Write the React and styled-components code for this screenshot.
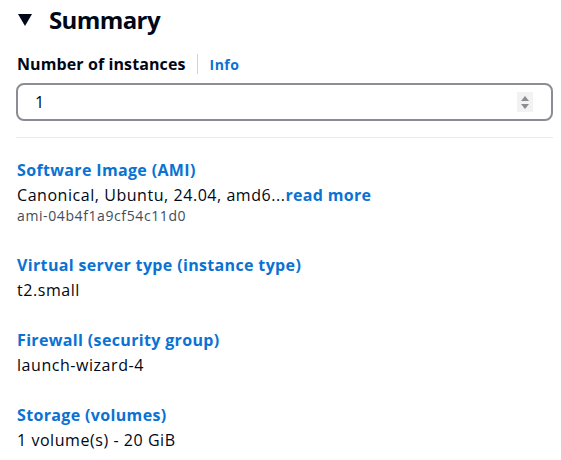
import React from "react";
import styled, { createGlobalStyle } from "styled-components";

const GlobalStyle = createGlobalStyle`
  body {
    margin: 0;
    background: #ffffff;
    font-family: "Open Sans", "Noto Sans", Arial, sans-serif;
    color: #000716;
  }
`;

const Panel = styled.section`
  width: 561px;
  box-sizing: border-box;
  padding: 5px 8px 0 16px;
  display: flex;
  flex-direction: column;
`;

const Header = styled.h2`
  margin: 0;
  display: flex;
  align-items: center;
  gap: 17px;
  font-size: 24px;
  line-height: 30px;
  font-weight: 700;
  letter-spacing: -0.6px;
  color: #000716;
  padding-left: 2px;
`;

const Caret = styled.svg`
  width: 14px;
  height: 12px;
  flex: none;
`;

const LabelRow = styled.div`
  margin-top: 18px;
  display: flex;
  align-items: center;
  height: 22px;
`;

const Label = styled.span`
  font-size: 16px;
  font-weight: 700;
  line-height: 22px;
  letter-spacing: 0.1px;
  padding-left: 1px;
`;

const Separator = styled.span`
  width: 1px;
  height: 20px;
  background: #d1d5db;
  margin: 0 12px 0 11px;
`;

const InfoLink = styled.a`
  font-size: 14px;
  font-weight: 700;
  letter-spacing: 0.5px;
  color: #0972d3;
  text-decoration: none;
`;

const InputBox = styled.div`
  margin-top: 8px;
  height: 38px;
  box-sizing: border-box;
  border: 2px solid #8c8c94;
  border-radius: 8px;
  display: flex;
  align-items: center;
  justify-content: space-between;
  padding: 0 18px 0 17px;
  font-size: 16px;
`;

const Spinner = styled.svg`
  width: 16px;
  height: 20px;
`;

const Divider = styled.hr`
  margin: 16px 0 0;
  border: none;
  border-top: 1px solid #e9ebed;
`;

const List = styled.div`
  margin-top: 21px;
  display: flex;
  flex-direction: column;
  gap: 28px;
`;

const Item = styled.div`
  display: flex;
  flex-direction: column;
`;

const Key = styled.a`
  font-size: 16px;
  font-weight: 700;
  line-height: 22px;
  letter-spacing: 0.35px;
  color: #0972d3;
  text-decoration: none;
  margin-bottom: 3px;
  padding-left: 1px;
`;

const Value = styled.div`
  font-size: 16px;
  line-height: 22px;
  letter-spacing: 0.55px;
  padding-left: 1px;
`;

const More = styled.a`
  color: #0972d3;
  font-weight: 700;
  letter-spacing: 0.3px;
  text-decoration: none;
`;

const Sub = styled.div`
  font-size: 14px;
  line-height: 20px;
  letter-spacing: 0.6px;
  color: #414d5c;
  padding-left: 1px;
`;

const items = [
  {
    key: "Software Image (AMI)",
    value: (
      <>
        Canonical, Ubuntu, 24.04, amd6...<More href="#">read more</More>
      </>
    ),
    sub: "ami-04b4f1a9cf54c11d0",
  },
  { key: "Virtual server type (instance type)", value: "t2.small" },
  { key: "Firewall (security group)", value: "launch-wizard-4" },
  { key: "Storage (volumes)", value: "1 volume(s) - 20 GiB" },
];

export default function App() {
  return (
    <>
      <GlobalStyle />
      <Panel>
        <Header>
          <Caret viewBox="0 0 14 12">
            <path d="M0 0 H14 L7 12 Z" fill="#000716" />
          </Caret>
          Summary
        </Header>
        <LabelRow>
          <Label>Number of instances</Label>
          <Separator />
          <InfoLink href="#">Info</InfoLink>
        </LabelRow>
        <InputBox>
          <span>1</span>
          <Spinner viewBox="0 0 16 20">
            <rect width="16" height="20" fill="#f2f2f2" />
            <path d="M4 9 L8 4 L12 9 Z" fill="#8c8c94" />
            <path d="M4 12 L12 12 L8 17 Z" fill="#8c8c94" />
          </Spinner>
        </InputBox>
        <Divider />
        <List>
          {items.map((it) => (
            <Item key={it.key}>
              <Key href="#">{it.key}</Key>
              <Value>{it.value}</Value>
              {it.sub && <Sub>{it.sub}</Sub>}
            </Item>
          ))}
        </List>
      </Panel>
    </>
  );
}
